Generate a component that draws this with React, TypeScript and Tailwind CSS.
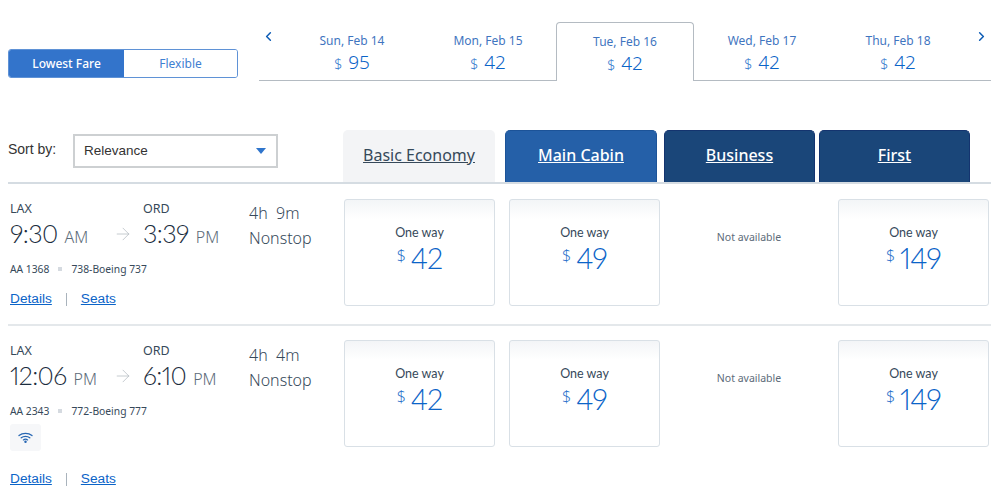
import {ArrowRight, ChevronLeft, ChevronRight} from 'lucide-react'

const dates = [
	{label: 'Sun, Feb 14', price: 95},
	{label: 'Mon, Feb 15', price: 42},
	{label: 'Tue, Feb 16', price: 42, active: true},
	{label: 'Wed, Feb 17', price: 42},
	{label: 'Thu, Feb 18', price: 42}
]

const flights = [
	{
		departTime: '9:30',
		departPeriod: 'AM',
		arriveTime: '3:39',
		duration: '4h  9m',
		flight: 'AA 1368',
		aircraft: '738-Boeing 737',
		wifi: false
	},
	{
		departTime: '12:06',
		departPeriod: 'PM',
		arriveTime: '6:10',
		duration: '4h  4m',
		flight: 'AA 2343',
		aircraft: '772-Boeing 777',
		wifi: true
	}
]

const WifiIcon = () => (
	<svg width="15" height="11" viewBox="0 0 15 11" fill="none" stroke="#2767b3" strokeWidth="1.3" strokeLinecap="round">
		<path d="M1 3.6C4.6 .6 10.4 .6 14 3.6" />
		<path d="M3.2 5.8C5.6 3.9 9.4 3.9 11.8 5.8" />
		<path d="M5.4 7.9C6.6 7 8.4 7 9.6 7.9" />
		<circle cx="7.5" cy="9.7" r=".6" fill="#2767b3" />
	</svg>
)

const TimeBlock = ({code, time, period}: {code: string; time: string; period: string}) => (
	<div>
		<div className="text-[12.5px] leading-[20px]">{code}</div>
		<div className="flex items-baseline whitespace-nowrap leading-[28px]">
			<span className="font-['Lato'] text-[25px] font-light tracking-[-0.6px] text-[#1b2d3e] proportional-nums">{time}</span>
			<span className="ml-[7px] text-[16px] font-light text-[#5c6b79]">{period}</span>
		</div>
	</div>
)

const FareCard = ({price}: {price: number}) => (
	<div className="flex h-[107px] w-[151px] flex-col items-center rounded-[3px] border border-[#d9e0e6] bg-gradient-to-b from-[#f3f5f7] from-0% to-white to-[18%] pt-[25px]">
		<span className="font-['Lato'] text-[12.5px] leading-[15px] text-[#36495a]">One way</span>
		<span className="flex items-start leading-[35px] text-[#0b64c8]">
			<span className="mr-[5px] text-[16px] font-light leading-[30px] text-[#2f75cc]">$</span>
			<span className="font-['Lato'] text-[29px] font-light tracking-[-0.8px] proportional-nums">{price}</span>
		</span>
	</div>
)

const FlightRow = ({flight}: {flight: (typeof flights)[number]}) => (
	<div className="group flex h-[142px] items-start border-b-2 border-[#e4e8eb] last:h-auto last:border-b-0">
		<div className="w-[336px] pl-[2px] pt-[15px] text-[#36495a]">
			<div className="flex">
				<div className="w-[106px]">
					<TimeBlock code="LAX" time={flight.departTime} period={flight.departPeriod} />
				</div>
				<div className="w-[27px] pt-[25px]">
					<ArrowRight className="-ml-[3px] size-[20px] text-[#aab2ba]" strokeWidth={0.8} />
				</div>
				<div className="w-[106px]">
					<TimeBlock code="ORD" time={flight.arriveTime} period="PM" />
				</div>
				<div className="pt-[2px] text-[16px] font-light leading-[25px] text-[#36495a]">
					<div className="whitespace-pre">{flight.duration}</div>
					<div>Nonstop</div>
				</div>
			</div>
			<div className="mt-[10px] flex items-center text-[10.3px] leading-[16px] text-[#36495a]">
				<span>{flight.flight}</span>
				<span className="mx-[9px] size-[4px] bg-[#d5dae0]" />
				<span>{flight.aircraft}</span>
			</div>
			{flight.wifi && (
				<div className="mt-[5px] flex h-[27px] w-[31px] items-center justify-center rounded-[3px] bg-[#f6f7f9]">
					<WifiIcon />
				</div>
			)}
			<div className={`flex items-center font-['Liberation_Sans'] text-[13.7px] leading-[16px] text-[#0b64c8] ${flight.wifi ? 'mt-[20px]' : 'mt-[14px]'}`}>
				<a className="underline">Details</a>
				<span className="mx-[14px] h-[13px] w-px bg-[#a9b3bc]" />
				<a className="underline">Seats</a>
			</div>
		</div>
		<div className="mt-[14px] flex group-first:mt-[15px]">
			<FareCard price={42} />
			<div className="ml-[14px]"><FareCard price={49} /></div>
			<div className="w-[178px] pt-[30px] text-center text-[10.5px] leading-[16px] text-[#5c6b79]">
				Not available
			</div>
			<FareCard price={149} />
		</div>
	</div>
)

export default function App() {
	return (
		<div className="h-[495px] w-[1000px] overflow-hidden bg-white font-['Noto_Sans',sans-serif]">
			<div className="flex h-[130px] items-start pl-[8px] pt-[22px]">
				{/* Fare type toggle */}
				<div className="mt-[27px] flex h-[29px] w-[230px] overflow-hidden rounded-[3px] border border-[#5f92d6] text-[12px]">
					<div className="flex w-[115px] items-center justify-center bg-[#3374cb] font-medium text-white">Lowest Fare</div>
					<div className="flex flex-1 items-center justify-center bg-white text-[#3f80d2]">Flexible</div>
				</div>
				{/* Date strip */}
				<div className="relative ml-[21px] flex h-[59px] w-[732px] items-stretch border-b border-[#b4bbc2] px-[25px]">
					<ChevronLeft className="absolute left-[2px] top-[7px] size-[15px] text-[#0b5bb5]" strokeWidth={2.4} />
					<ChevronRight className="absolute right-[2px] top-[7px] size-[15px] text-[#0b5bb5]" strokeWidth={2.4} />
					{dates.map(date => (
						<div
							key={date.label}
							className={`flex flex-1 flex-col items-center pt-[10px] ${date.active ? 'relative -mb-px rounded-t-[4px] border border-b-0 border-[#b4bbc2] bg-white' : ''}`}
						>
							<span className="text-[12px] leading-[18px] text-[#3f75c0]">{date.label}</span>
							<span className="flex items-baseline leading-[24px] text-[#0b64c8]">
								<span className="mr-[6px] text-[14px] font-light text-[#2f75cc]">$</span>
								<span className="text-[19px] font-light">{date.price}</span>
							</span>
						</div>
					))}
				</div>
			</div>
			{/* Sort control and cabin headers */}
			<div className="ml-[8px] flex h-[54px] w-[983px] items-start border-b-2 border-[#d5dce2]">
				<div className="flex w-[335px] items-start">
					<span className="mt-[10px] w-[65px] font-['Liberation_Sans'] text-[14px] leading-[18px] text-[#333]">Sort by:</span>
					<div className="mt-[4px] flex h-[34px] w-[205px] items-center justify-between border-2 border-[#cdd0d2] pl-[9px] pr-[10px] font-['Liberation_Sans'] text-[13.5px] text-[#333]">
						Relevance
						<span className="h-0 w-0 border-x-[5px] border-t-[6px] border-x-transparent border-t-[#2f75cc]" />
					</div>
				</div>
				<div className="flex h-[52px] text-[16px]">
					<div className="flex w-[152px] items-center justify-center rounded-t-[5px] bg-[#f3f4f6] pb-[3px] text-[#36495a] underline">Basic Economy</div>
					<div className="ml-[10px] flex w-[152px] items-center justify-center rounded-t-[5px] border border-b-0 border-[#1c5398] bg-[#2560a8] pb-[3px] font-medium text-white underline">Main Cabin</div>
					<div className="ml-[7px] flex w-[151px] items-center justify-center rounded-t-[5px] border border-b-0 border-[#14346f] bg-[#1a4679] pb-[3px] font-medium text-white underline">Business</div>
					<div className="ml-[4px] flex w-[151px] items-center justify-center rounded-t-[5px] border border-b-0 border-[#14346f] bg-[#1a4679] pb-[3px] font-medium text-white underline">First</div>
				</div>
			</div>
			<div className="ml-[8px] w-[983px]">
				{flights.map(flight => (
					<FlightRow key={flight.flight} flight={flight} />
				))}
			</div>
		</div>
	)
}
